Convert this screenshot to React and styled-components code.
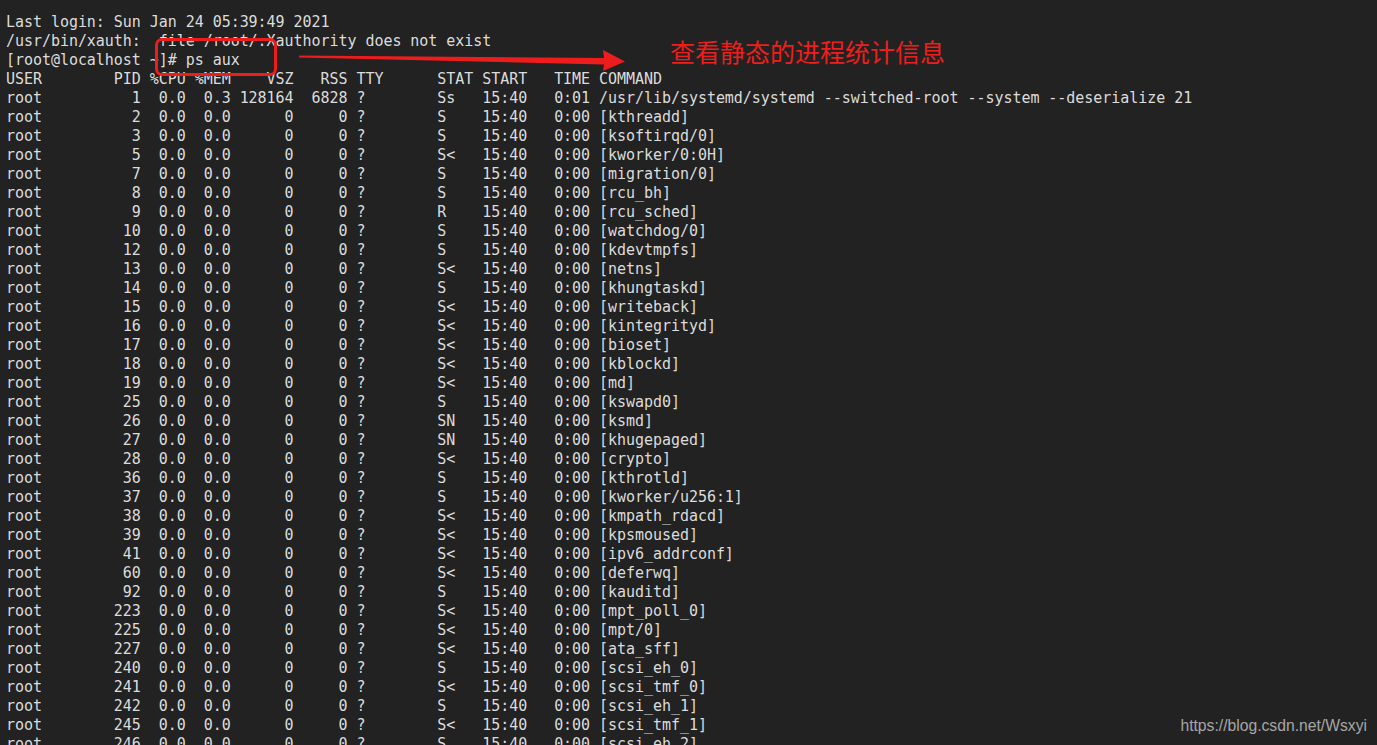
import React from 'react'
import styled, { createGlobalStyle } from 'styled-components'

const Global = createGlobalStyle`
    html, body {
        margin: 0;
        padding: 0;
        background: #222222;
        overflow: hidden;
    }
`;

const Screen = styled.div`
    position: relative;
    width: 1377px;
    height: 745px;
    overflow: hidden;
    background: #222222;
`;

const Terminal = styled.div`
    display: flex;
    flex-direction: column;
    padding: 13px 0 0 6px;
`;

const Line = styled.div`
    font-family: "DejaVu Sans Mono", monospace;
    font-size: 15px;
    letter-spacing: -0.045px;
    line-height: 19px;
    height: 19px;
    white-space: pre;
    color: #dcdcdc;
`;

const RedBox = styled.div`
    position: absolute;
    left: 155px;
    top: 38px;
    width: 122px;
    height: 38px;
    box-sizing: border-box;
    border: 3px solid #ee1d1d;
    border-radius: 7px;
`;

const Arrow = styled.svg`
    position: absolute;
    left: 0;
    top: 0;
    overflow: visible;
`;

const Note = styled.div`
    position: absolute;
    left: 670px;
    top: 37px;
    font-family: "Noto Sans CJK SC", sans-serif;
    font-size: 25px;
    line-height: 28px;
    color: #ec1f1c;
    white-space: nowrap;
`;

const Watermark = styled.div`
    position: absolute;
    right: 10px;
    bottom: 10px;
    font-family: "Liberation Sans", Arial, sans-serif;
    font-size: 15.7px;
    line-height: 18px;
    color: #a6a6a6;
    white-space: nowrap;
`;

// pid, cpu, mem, vsz, rss, stat, time, command
const procs = [
    ['1', '0.0', '0.3', '128164', '6828', 'Ss', '0:01', '/usr/lib/systemd/systemd --switched-root --system --deserialize 21'],
    ['2', '0.0', '0.0', '0', '0', 'S', '0:00', '[kthreadd]'],
    ['3', '0.0', '0.0', '0', '0', 'S', '0:00', '[ksoftirqd/0]'],
    ['5', '0.0', '0.0', '0', '0', 'S<', '0:00', '[kworker/0:0H]'],
    ['7', '0.0', '0.0', '0', '0', 'S', '0:00', '[migration/0]'],
    ['8', '0.0', '0.0', '0', '0', 'S', '0:00', '[rcu_bh]'],
    ['9', '0.0', '0.0', '0', '0', 'R', '0:00', '[rcu_sched]'],
    ['10', '0.0', '0.0', '0', '0', 'S', '0:00', '[watchdog/0]'],
    ['12', '0.0', '0.0', '0', '0', 'S', '0:00', '[kdevtmpfs]'],
    ['13', '0.0', '0.0', '0', '0', 'S<', '0:00', '[netns]'],
    ['14', '0.0', '0.0', '0', '0', 'S', '0:00', '[khungtaskd]'],
    ['15', '0.0', '0.0', '0', '0', 'S<', '0:00', '[writeback]'],
    ['16', '0.0', '0.0', '0', '0', 'S<', '0:00', '[kintegrityd]'],
    ['17', '0.0', '0.0', '0', '0', 'S<', '0:00', '[bioset]'],
    ['18', '0.0', '0.0', '0', '0', 'S<', '0:00', '[kblockd]'],
    ['19', '0.0', '0.0', '0', '0', 'S<', '0:00', '[md]'],
    ['25', '0.0', '0.0', '0', '0', 'S', '0:00', '[kswapd0]'],
    ['26', '0.0', '0.0', '0', '0', 'SN', '0:00', '[ksmd]'],
    ['27', '0.0', '0.0', '0', '0', 'SN', '0:00', '[khugepaged]'],
    ['28', '0.0', '0.0', '0', '0', 'S<', '0:00', '[crypto]'],
    ['36', '0.0', '0.0', '0', '0', 'S', '0:00', '[kthrotld]'],
    ['37', '0.0', '0.0', '0', '0', 'S', '0:00', '[kworker/u256:1]'],
    ['38', '0.0', '0.0', '0', '0', 'S<', '0:00', '[kmpath_rdacd]'],
    ['39', '0.0', '0.0', '0', '0', 'S<', '0:00', '[kpsmoused]'],
    ['41', '0.0', '0.0', '0', '0', 'S<', '0:00', '[ipv6_addrconf]'],
    ['60', '0.0', '0.0', '0', '0', 'S<', '0:00', '[deferwq]'],
    ['92', '0.0', '0.0', '0', '0', 'S', '0:00', '[kauditd]'],
    ['223', '0.0', '0.0', '0', '0', 'S<', '0:00', '[mpt_poll_0]'],
    ['225', '0.0', '0.0', '0', '0', 'S<', '0:00', '[mpt/0]'],
    ['227', '0.0', '0.0', '0', '0', 'S<', '0:00', '[ata_sff]'],
    ['240', '0.0', '0.0', '0', '0', 'S', '0:00', '[scsi_eh_0]'],
    ['241', '0.0', '0.0', '0', '0', 'S<', '0:00', '[scsi_tmf_0]'],
    ['242', '0.0', '0.0', '0', '0', 'S', '0:00', '[scsi_eh_1]'],
    ['245', '0.0', '0.0', '0', '0', 'S<', '0:00', '[scsi_tmf_1]'],
    ['246', '0.0', '0.0', '0', '0', 'S', '0:00', '[scsi_eh_2]'],
];

const row = (user, pid, cpu, mem, vsz, rss, tty, stat, start, time, cmd) =>
    user.padEnd(4) + pid.padStart(11) + ' ' + cpu.padStart(4) + ' ' + mem.padStart(4) +
    ' ' + vsz.padStart(6) + ' ' + rss.padStart(5) + ' ' + tty.padEnd(8) + ' ' +
    stat.padEnd(4) + ' ' + start.padStart(5) + ' ' + time.padStart(6) + ' ' + cmd;

const header = row('USER', 'PID', '%CPU', '%MEM', 'VSZ', 'RSS', 'TTY', 'STAT', 'START', 'TIME', 'COMMAND');

export default function App() {
    return (
        <Screen>
            <Global />
            <Terminal>
                <Line>Last login: Sun Jan 24 05:39:49 2021</Line>
                <Line>/usr/bin/xauth:  file /root/.Xauthority does not exist</Line>
                <Line>[root@localhost ~]# ps aux</Line>
                <Line>{header}</Line>
                {procs.map(([pid, cpu, mem, vsz, rss, stat, time, cmd]) => (
                    <Line key={pid}>{row('root', pid, cpu, mem, vsz, rss, '?', stat, '15:40', time, cmd)}</Line>
                ))}
            </Terminal>
            <RedBox />
            <Arrow width="1377" height="745">
                <polygon
                    points="299,55.5 604,58 603,50 625,61.5 603,71 604,64.5 299,57.5"
                    fill="#ee1d1d"
                />
            </Arrow>
            <Note>查看静态的进程统计信息</Note>
            <Watermark>https://blog.csdn.net/Wsxyi</Watermark>
        </Screen>
    )
}
